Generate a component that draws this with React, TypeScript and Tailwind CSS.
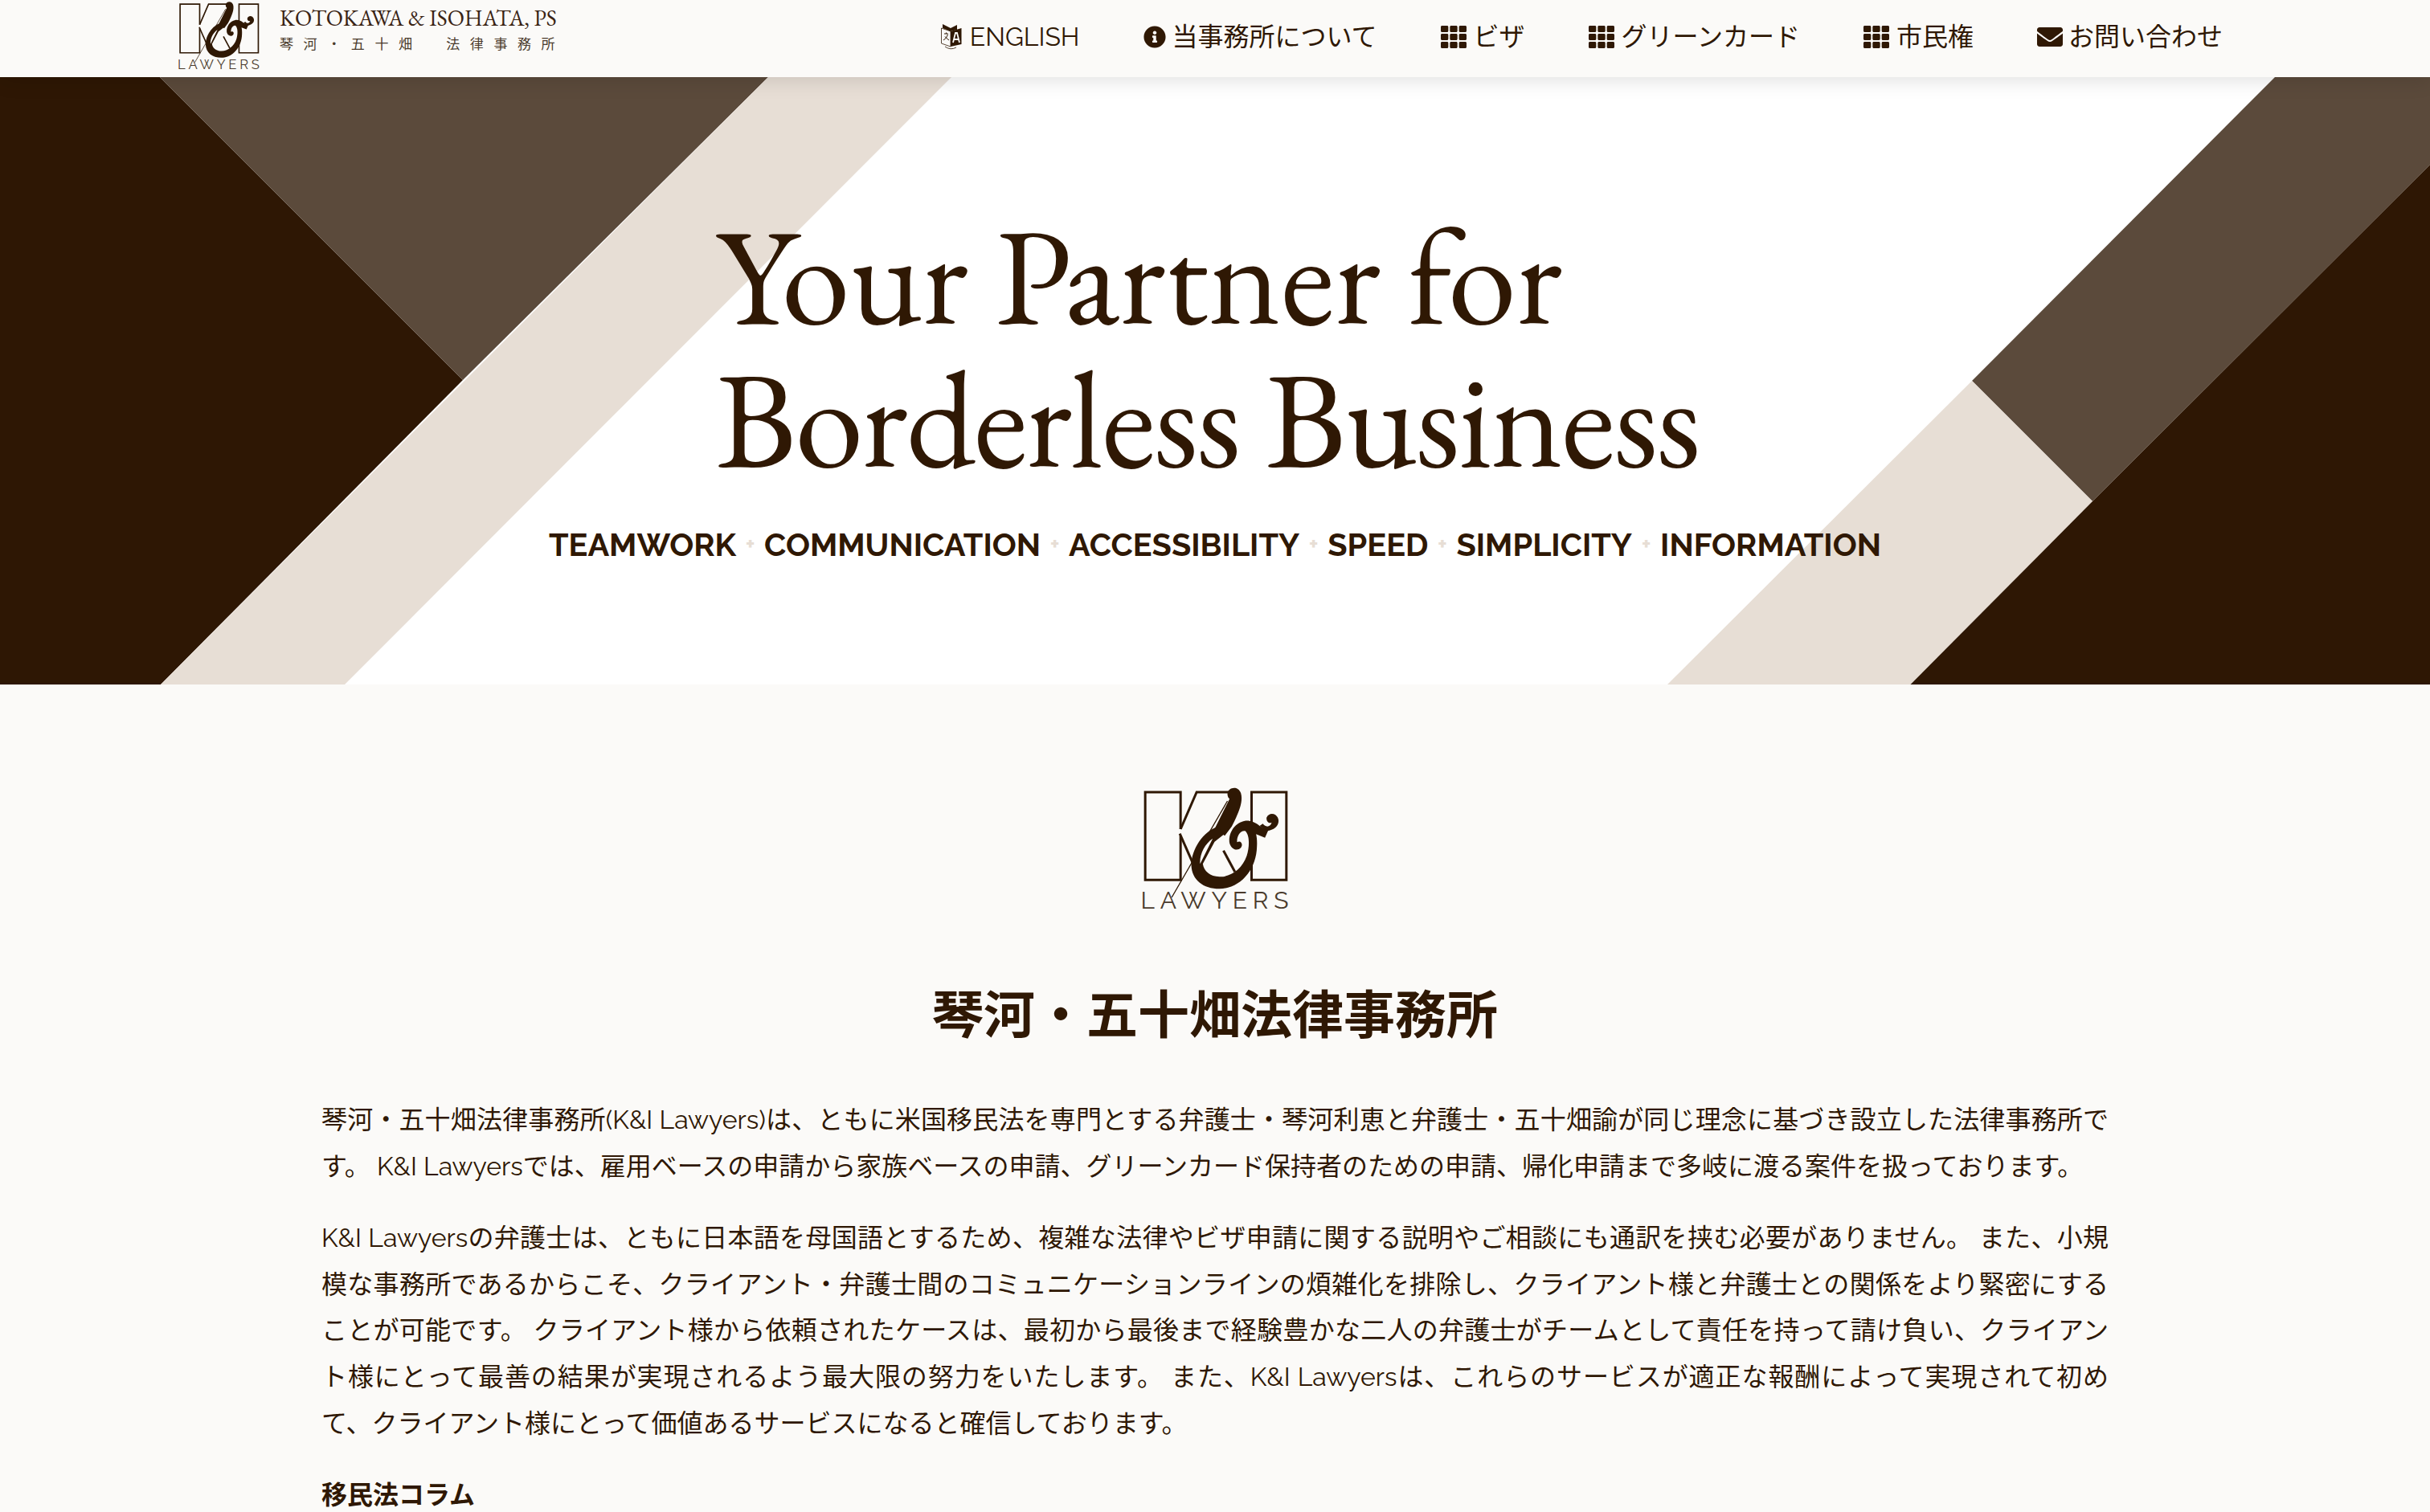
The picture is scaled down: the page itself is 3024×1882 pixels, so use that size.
import React from 'react';
import { FaTh, FaInfoCircle, FaEnvelope } from 'react-icons/fa';

const navItems = [
  { label: '当事務所について', gap: 'gap-[8px]', icon: <FaInfoCircle className="w-[28px] h-[28px]" /> },
  { label: 'ビザ', gap: 'gap-[9px]', icon: <FaTh className="w-[32px] h-[32px]" /> },
  { label: 'グリーンカード', gap: 'gap-[9px]', icon: <FaTh className="w-[32px] h-[32px]" /> },
  { label: '市民権', gap: 'gap-[9px]', icon: <FaTh className="w-[32px] h-[32px]" /> },
  { label: 'お問い合わせ', gap: 'gap-[7px]', icon: <FaEnvelope className="w-[32px] h-[32px]" /> },
];

const values = ['TEAMWORK', 'COMMUNICATION', 'ACCESSIBILITY', 'SPEED', 'SIMPLICITY', 'INFORMATION'];

const LanguageIcon = () => (
  <svg viewBox="0 0 26 32" className="w-[26px] h-[32px]">
    <path d="M0.5 5 L12 9 V28 L0.5 24 Z" fill="#fbfaf8" stroke="#2f1804" strokeWidth="0.8" />
    <path d="M12 9 L25.5 5 V25 L12 28 Z" fill="#2f1804" />
    <path d="M2 0 L12 5 L20 1 V7 L12 9 L2 5 Z" fill="#2f1804" />
    <path d="M4 12 H9 M6.5 10.5 V12 M8.5 13 Q7 18 3 20 M5 15.5 Q7 18 10 20" fill="none" stroke="#2f1804" strokeWidth="1" />
    <path d="M15 23 L18 11 H20 L23 23 M16.3 19 H21.7" fill="none" stroke="#fbfaf8" strokeWidth="1.8" />
    <path d="M5 28 Q12 33 19 29" fill="none" stroke="#2f1804" strokeWidth="0.8" />
  </svg>
);

const Logo = ({ className }: { className: string }) => (
  <svg viewBox="100 50 590 480" className={className}>
    <g fill="none" stroke="#2f1804" strokeWidth="9">
      <path d="M265 215 V77 H133 V405 H265 V240" />
      <path d="M265 215 L325 77 H450" />
      <path d="M262 232 L312 345" />
      <path d="M425 295 L468 375" />
      <path d="M530 190 V77 H660 V405 H530 V340" />
    </g>
    <path d="M232 470 L440 110" stroke="#2f1804" strokeWidth="4" fill="none" />
    <path
      fill="#2f1804"
      d="M440 82 C442 60 478 50 490 80 C500 112 482 155 456 205 L430 240 C415 228 402 222 392 214 L448 102 C442 98 440 90 440 82 Z"
    />
    <path
      fill="#2f1804"
      fillRule="evenodd"
      d="M405 205 C350 222 305 290 305 350 C307 405 350 438 410 438 C490 436 548 365 550 280 C551 262 550 248 547 234 L580 247 L592 220 L560 203 C545 190 525 182 505 184 C470 190 445 225 447 262 C450 288 475 300 490 285 C500 272 490 255 476 264 C474 240 490 218 506 222 C522 235 524 275 512 315 C495 365 450 395 410 393 C375 392 352 372 348 345 L392 262 L425 236 Z M338 345 C335 310 355 270 385 250 L338 345 Z"
    />
    <path
      fill="#2f1804"
      d="M560 203 L588 222 C615 218 635 200 630 178 C625 155 595 150 586 172 C584 185 596 196 605 190 C602 205 585 212 572 195 Z"
    />
    <text x="116" y="513" fontSize="90" fontFamily="Raleway, sans-serif" fontWeight="400" fill="#4a3a2c" textLength="552">
      LAWYERS
    </text>
  </svg>
);

export default function App() {
  return (
    <div className="h-[1882px] overflow-hidden bg-[#fbfaf8] text-[#2f1804] font-['Raleway','Noto_Sans_CJK_JP',sans-serif]">
      <header className="relative z-10 flex h-[96px] items-start justify-between bg-[#fbfaf8] pl-[218px] pr-[258px] shadow-[0_4px_24px_rgba(0,0,0,0.12)]">
        <div className="flex items-start gap-[21px]">
          <Logo className="w-[109px] h-[89px]" />
          <div className="w-[360px] pt-[6px]">
            <div className="font-['EB_Garamond','Liberation_Serif',serif] text-[27.8px] leading-[32px] text-[#3a2414] whitespace-nowrap">KOTOKAWA &amp; ISOHATA, PS</div>
            <div className="mt-[5px] text-[17px] leading-[24px] tracking-[12.6px] text-[#4a3a2c] whitespace-nowrap">琴河・五十畑　法律事務所</div>
          </div>
        </div>
        <nav className="flex h-[92px] items-center gap-[79px] text-[32px]">
          <a className="flex items-center gap-[10px] whitespace-nowrap">
            <LanguageIcon />
            ENGLISH
          </a>
          {navItems.map(item => (
            <a key={item.label} className={`flex items-center ${item.gap} whitespace-nowrap`}>
              {item.icon}
              {item.label}
            </a>
          ))}
        </nav>
      </header>

      <section className="relative h-[756px] bg-white">
        <svg viewBox="0 0 3024 756" preserveAspectRatio="none" className="absolute inset-0 h-full w-full">
          <polygon points="0,0 199,0 576,377 200,756 0,756" fill="#2e1704" />
          <polygon points="199,0 956,0 576,377" fill="#5b4a3b" />
          <polygon points="956,0 1184,0 429,756 200,756" fill="#e7ded5" />
          <polygon points="2831,0 3024,0 3024,109 2604,528 2454,378" fill="#5b4a3b" />
          <polygon points="2454,378 2604,528 2377.5,756 2075,756" fill="#e7ded5" />
          <polygon points="3024,109 3024,756 2377.5,756 2604,528" fill="#2e1704" />
        </svg>
        <div className="relative flex flex-col items-center pt-[158px]">
          <h1 className="w-[1242px] whitespace-nowrap font-['EB_Garamond','Liberation_Serif',serif] text-[171px] leading-[178px] font-normal">
            Your Partner for
            <br />
            <span className="tracking-[-1.9px]">Borderless Business</span>
          </h1>
          <div className="mt-[44px] flex items-center text-[39.7px] leading-[48px] font-bold">
            {values.map((value, i) => (
              <React.Fragment key={value}>
                {i > 0 && <span className="w-[35px] text-center text-[28px] text-[#e7ded5]">+</span>}
                <span>{value}</span>
              </React.Fragment>
            ))}
          </div>
        </div>
      </section>

      <main className="mx-auto flex w-[2224px] flex-col items-center pt-[125px]">
        <Logo className="w-[197px] h-[160px]" />
        <h2 className="mt-[88px] text-[64px] leading-[77px] font-bold">琴河・五十畑法律事務所</h2>
        <div className="mt-[63px] w-full text-[32px] leading-[57.6px] text-justify">
          <p>
            琴河・五十畑法律事務所(K&amp;I Lawyers)は、ともに米国移民法を専門とする弁護士・琴河利恵と弁護士・五十畑諭が同じ理念に基づき設立した法律事務所です。 K&amp;I Lawyersでは、雇用ベースの申請から家族ベースの申請、グリーンカード保持者のための申請、帰化申請まで多岐に渡る案件を扱っております。
          </p>
          <p className="mt-[32px]">
            K&amp;I Lawyersの弁護士は、ともに日本語を母国語とするため、複雑な法律やビザ申請に関する説明やご相談にも通訳を挟む必要がありません。 また、小規模な事務所であるからこそ、クライアント・弁護士間のコミュニケーションラインの煩雑化を排除し、クライアント様と弁護士との関係をより緊密にすることが可能です。 クライアント様から依頼されたケースは、最初から最後まで経験豊かな二人の弁護士がチームとして責任を持って請け負い、クライアント様にとって最善の結果が実現されるよう最大限の努力をいたします。 また、K&amp;I Lawyersは、これらのサービスが適正な報酬によって実現されて初めて、クライアント様にとって価値あるサービスになると確信しております。
          </p>
          <p className="mt-[32px] font-bold">移民法コラム</p>
        </div>
      </main>
    </div>
  );
}
